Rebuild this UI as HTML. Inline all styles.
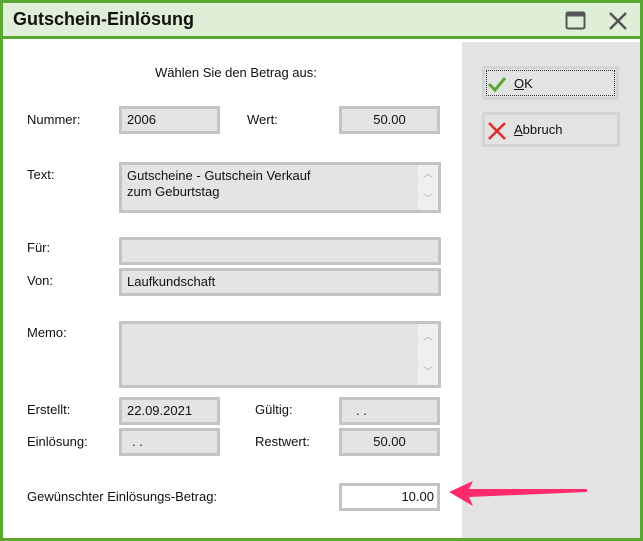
<!DOCTYPE html>
<html><head><meta charset="utf-8"><style>
*{margin:0;padding:0;box-sizing:border-box}
body{width:643px;height:541px;overflow:hidden;background:#fff;font-family:"Liberation Sans",sans-serif;font-size:13px;color:#111;position:relative}
.a{position:absolute}
.frame{left:0;top:0;width:643px;height:541px;border:3px solid #5aa832}
.title{left:3px;top:3px;width:637px;height:36px;background:#dfeed6;border-bottom:3px solid #5aa832}
.title span{position:absolute;left:10px;top:6px;font-size:18px;font-weight:bold;color:#111}
.side{left:462px;top:42px;width:178px;height:496px;background:#e3e3e3}
.f{position:absolute;border:3px solid #c4c4c4;background:#e4e4e4;padding:3px 5px;line-height:16px}
.r{text-align:center}
.l{position:absolute}
.sb{position:absolute;right:0;top:0;bottom:0;width:20px;background:#efefef;color:#aaa;font-size:10px}
.btn{position:absolute;background:#e3e3e3;border:3px solid #d4d4d4}
</style></head><body>
<div class="a frame"></div>
<div class="a title"><span>Gutschein-Einlösung</span>
<svg class="a" style="left:562px;top:8px" width="22" height="20"><rect x="1.5" y="1.5" width="18" height="16" rx="1.5" fill="none" stroke="#555" stroke-width="2"/><rect x="1.5" y="1.5" width="18" height="4" fill="#555"/></svg>
<svg class="a" style="left:605px;top:8px" width="20" height="20"><path d="M2 2L18 18M18 2L2 18" stroke="#555" stroke-width="2.5"/></svg>
</div>
<div class="a side"></div>
<div class="btn" style="left:482px;top:66px;width:137px;height:34px"><div style="position:absolute;inset:1px;border:1px dotted #333"></div>
<svg class="a" style="left:2px;top:6px" width="20" height="18"><path d="M2 9L8 15L18 3" fill="none" stroke="#5aa832" stroke-width="3"/></svg>
<span class="a" style="left:29px;top:7px"><u>O</u>K</span></div>
<div class="btn" style="left:482px;top:112px;width:138px;height:35px">
<svg class="a" style="left:2px;top:6px" width="20" height="20"><path d="M2 2L18 18M18 2L2 18" stroke="#e02b2b" stroke-width="2.5"/></svg>
<span class="a" style="left:29px;top:7px"><u>A</u>bbruch</span></div>

<div class="l" style="left:155px;top:65px">Wählen Sie den Betrag aus:</div>
<div class="l" style="left:27px;top:112px">Nummer:</div>
<div class="f" style="left:119px;top:106px;width:101px;height:28px">2006</div>
<div class="l" style="left:247px;top:112px">Wert:</div>
<div class="f r" style="left:339px;top:106px;width:101px;height:28px">50.00</div>
<div class="l" style="left:27px;top:167px">Text:</div>
<div class="f" style="left:119px;top:162px;width:322px;height:51px">Gutscheine - Gutschein Verkauf<br>zum Geburtstag<div class="sb"><div style="position:absolute;top:2px;left:5px">︿</div><div style="position:absolute;bottom:2px;left:5px">﹀</div></div></div>
<div class="l" style="left:27px;top:240px">Für:</div>
<div class="f" style="left:119px;top:237px;width:322px;height:28px"></div>
<div class="l" style="left:27px;top:273px">Von:</div>
<div class="f" style="left:119px;top:268px;width:322px;height:28px">Laufkundschaft</div>
<div class="l" style="left:27px;top:325px">Memo:</div>
<div class="f" style="left:119px;top:321px;width:322px;height:67px"><div class="sb"><div style="position:absolute;top:6px;left:5px">︿</div><div style="position:absolute;bottom:4px;left:5px">﹀</div></div></div>
<div class="l" style="left:27px;top:402px">Erstellt:</div>
<div class="f" style="left:119px;top:397px;width:101px;height:28px">22.09.2021</div>
<div class="l" style="left:255px;top:402px">Gültig:</div>
<div class="f" style="left:339px;top:397px;width:101px;height:28px;padding-left:14px">. .</div>
<div class="l" style="left:27px;top:434px">Einlösung:</div>
<div class="f" style="left:119px;top:428px;width:101px;height:28px;padding-left:10px">. .</div>
<div class="l" style="left:255px;top:434px">Restwert:</div>
<div class="f r" style="left:339px;top:428px;width:101px;height:28px">50.00</div>
<div class="l" style="left:27px;top:489px">Gewünschter Einlösungs-Betrag:</div>
<div class="f" style="left:339px;top:483px;width:101px;height:28px;background:#fff;text-align:right;padding-right:3px">10.00</div>
<svg class="a" style="left:445px;top:478px" width="150" height="30"><path d="M4 14L28 3L24 11L142 11L142 14L24 19L28 28Z" fill="#ff2a6a"/></svg>
</body></html>
